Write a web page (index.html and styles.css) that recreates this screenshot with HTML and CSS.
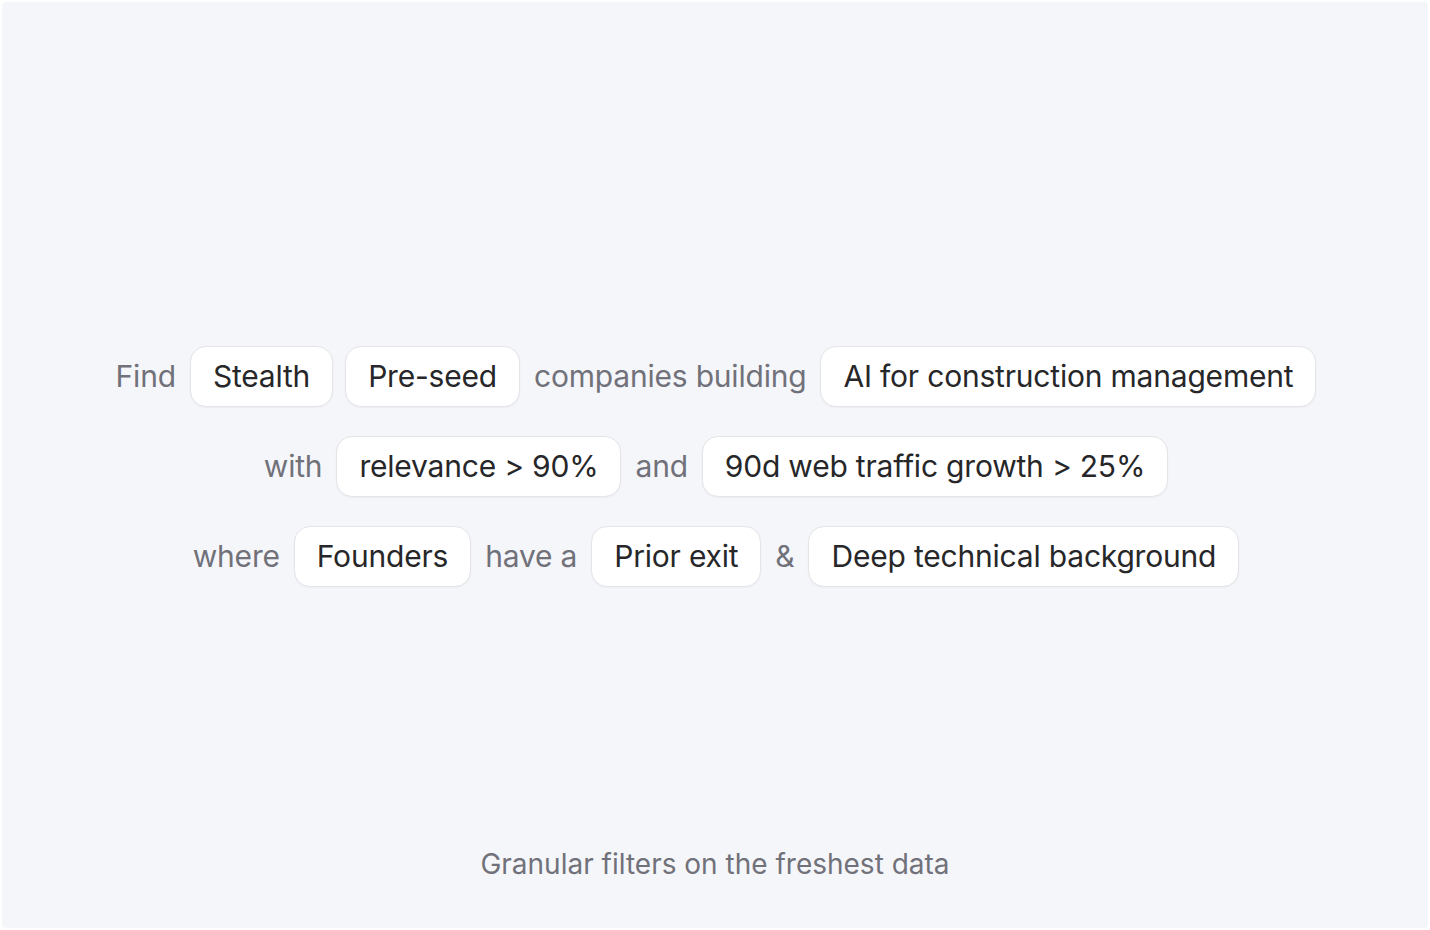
FILE: index.html
```html
<!DOCTYPE html>
<html lang="en">
<head>
<meta charset="utf-8">
<title>Granular filters</title>
<link rel="stylesheet" href="styles.css">
</head>
<body>
<main class="panel">
  <div class="spacer"></div>
  <section class="query">
    <div class="row">
      <span class="word">Find</span>
      <span class="chip">Stealth</span>
      <span class="chip">Pre-seed</span>
      <span class="word">companies building</span>
      <span class="chip">AI for construction management</span>
    </div>
    <div class="row">
      <span class="word">with</span>
      <span class="chip">relevance &gt; 90%</span>
      <span class="word">and</span>
      <span class="chip">90d web traffic growth &gt; 25%</span>
    </div>
    <div class="row">
      <span class="word">where</span>
      <span class="chip">Founders</span>
      <span class="word">have a</span>
      <span class="chip">Prior exit</span>
      <span class="word">&amp;</span>
      <span class="chip">Deep technical background</span>
    </div>
  </section>
  <footer class="caption">Granular filters on the freshest data</footer>
</main>
</body>
</html>
```

FILE: styles.css
```css
* { box-sizing: border-box; }
html, body { margin: 0; padding: 0; background: #ffffff; }
body {
  font-family: Inter, "Noto Sans", "Liberation Sans", sans-serif;
  padding: 2px;
}
.panel {
  height: 926px;
  padding-top: 2px;
  background: #f5f6fa;
  border-radius: 4px;
  display: grid;
  grid-template-rows: 1fr auto 1fr;
  justify-items: center;
}
.query {
  display: flex;
  flex-direction: column;
  align-items: center;
  gap: 29px;
}
.row {
  display: flex;
  align-items: center;
  gap: 12px;
}
.word {
  font-size: 30px;
  letter-spacing: -0.2px;
  color: #71717a;
  padding: 0 2px;
}
.chip {
  font-size: 30px;
  letter-spacing: -0.2px;
  line-height: 33px;
  color: #27272a;
  background: #ffffff;
  border: 1px solid #e4e4e9;
  border-radius: 16px;
  padding: 13px 22px;
  box-shadow: 0 1px 2px rgba(20, 20, 40, 0.04);
}
.caption {
  align-self: end;
  padding-bottom: 47px;
  font-size: 28px;
  color: #71717a;
}
```
